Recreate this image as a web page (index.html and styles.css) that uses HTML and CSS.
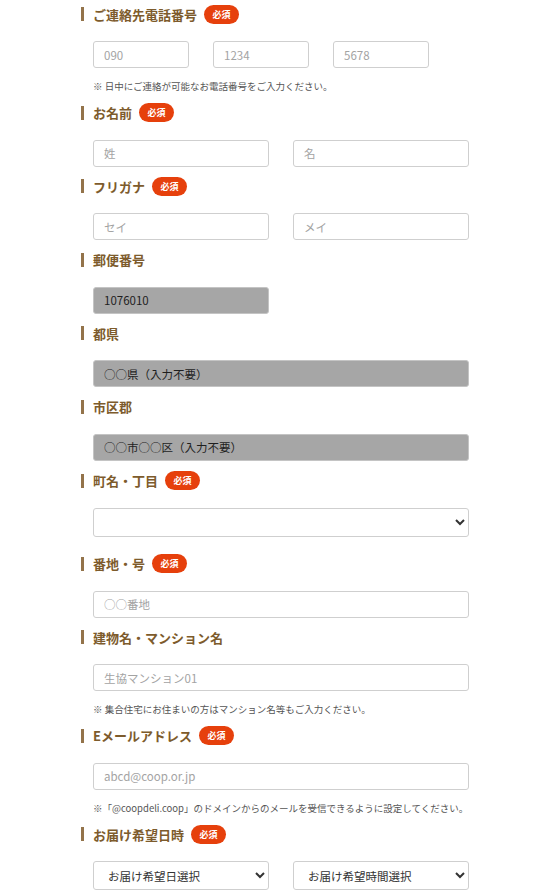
FILE: index.html
```html
<!DOCTYPE html>
<html lang="ja">
<head>
<meta charset="utf-8">
<title>フォーム</title>
<link rel="stylesheet" href="styles.css">
</head>
<body>
<form class="form">
  <div class="group">
    <div class="label">ご連絡先電話番号<span class="req">必須</span></div>
    <div class="field row tel">
      <input class="input" type="text" placeholder="090">
      <input class="input" type="text" placeholder="1234">
      <input class="input" type="text" placeholder="5678">
    </div>
    <p class="note">※ 日中にご連絡が可能なお電話番号をご入力ください。</p>
  </div>
  <div class="group">
    <div class="label">お名前<span class="req">必須</span></div>
    <div class="field row half">
      <input class="input" type="text" placeholder="姓">
      <input class="input" type="text" placeholder="名">
    </div>
  </div>
  <div class="group">
    <div class="label">フリガナ<span class="req">必須</span></div>
    <div class="field row half">
      <input class="input" type="text" placeholder="セイ">
      <input class="input" type="text" placeholder="メイ">
    </div>
  </div>
  <div class="group">
    <div class="label">郵便番号</div>
    <div class="field row half">
      <input class="input filled" type="text" value="1076010" readonly>
    </div>
  </div>
  <div class="group">
    <div class="label">都県</div>
    <div class="field">
      <input class="input filled" type="text" value="○○県（入力不要）" readonly>
    </div>
  </div>
  <div class="group">
    <div class="label">市区郡</div>
    <div class="field">
      <input class="input filled" type="text" value="○○市○○区（入力不要）" readonly>
    </div>
  </div>
  <div class="group group-select">
    <div class="label">町名・丁目<span class="req">必須</span></div>
    <div class="field">
      <select class="select"><option></option></select>
    </div>
  </div>
  <div class="group">
    <div class="label">番地・号<span class="req">必須</span></div>
    <div class="field">
      <input class="input" type="text" placeholder="○○番地">
    </div>
  </div>
  <div class="group">
    <div class="label">建物名・マンション名</div>
    <div class="field">
      <input class="input" type="text" placeholder="生協マンション01">
    </div>
    <p class="note">※ 集合住宅にお住まいの方はマンション名等もご入力ください。</p>
  </div>
  <div class="group">
    <div class="label">Eメールアドレス<span class="req">必須</span></div>
    <div class="field">
      <input class="input" type="text" placeholder="abcd@coop.or.jp">
    </div>
    <p class="note">※「@coopdeli.coop」のドメインからのメールを受信できるように設定してください。</p>
  </div>
  <div class="group">
    <div class="label">お届け希望日時<span class="req">必須</span></div>
    <div class="field row half">
      <select class="select"><option>お届け希望日選択</option></select>
      <select class="select"><option>お届け希望時間選択</option></select>
    </div>
  </div>
</form>
</body>
</html>
```
FILE: styles.css
```css
html, body {
  margin: 0;
  padding: 0;
  background: #fff;
}
body {
  font-family: "Noto Sans CJK JP", "Noto Sans", sans-serif;
  color: #333;
}
.form {
  padding: 3px 0 0 81px;
  width: 388px;
}
.group {
  margin-bottom: 8.6px;
}
.group-select {
  margin-bottom: 16px;
}
.label {
  display: flex;
  align-items: center;
  height: 22px;
  font-size: 13px;
  font-weight: bold;
  color: #7d5b2c;
  margin-bottom: 16px;
}
.label::before {
  content: "";
  width: 3px;
  height: 14px;
  background: #93734a;
  margin-right: 9px;
  flex: none;
}
.req {
  display: inline-flex;
  align-items: center;
  justify-content: center;
  width: 35px;
  height: 19px;
  margin-left: 7px;
  border-radius: 10px;
  background: #e6400c;
  color: #fff;
  font-size: 9px;
  font-weight: bold;
  line-height: 1;
}
.field {
  margin-left: 12px;
  width: 376px;
}
.row {
  display: flex;
  gap: 24px;
}
.tel .input {
  width: 96px;
}
.half .input,
.half .select {
  width: 176px;
}
.input {
  box-sizing: border-box;
  display: block;
  width: 376px;
  height: 27px;
  margin: 0;
  padding: 0 10px;
  border: 1px solid #cfcfcf;
  border-radius: 3px;
  background: #fff;
  font-family: "Noto Sans CJK JP", "Noto Sans", sans-serif;
  font-size: 11.5px;
  color: #222;
  outline: none;
}
.input::placeholder {
  color: #a3a3a3;
}
.input.filled {
  background: #a6a6a6;
  border-color: #c4c4c4;
  color: #1e1e1e;
}
.select {
  box-sizing: border-box;
  display: block;
  width: 376px;
  height: 29px;
  margin: 0;
  padding: 0 6px 0 10px;
  border: 1px solid #cfcfcf;
  border-radius: 3px;
  background: #fff;
  font-family: "Noto Sans CJK JP", "Noto Sans", sans-serif;
  font-size: 11.5px;
  color: #333;
}
.note {
  margin: 11px 0 3px 12px;
  font-size: 9.5px;
  line-height: 14px;
  color: #555;
  white-space: nowrap;
}
```
